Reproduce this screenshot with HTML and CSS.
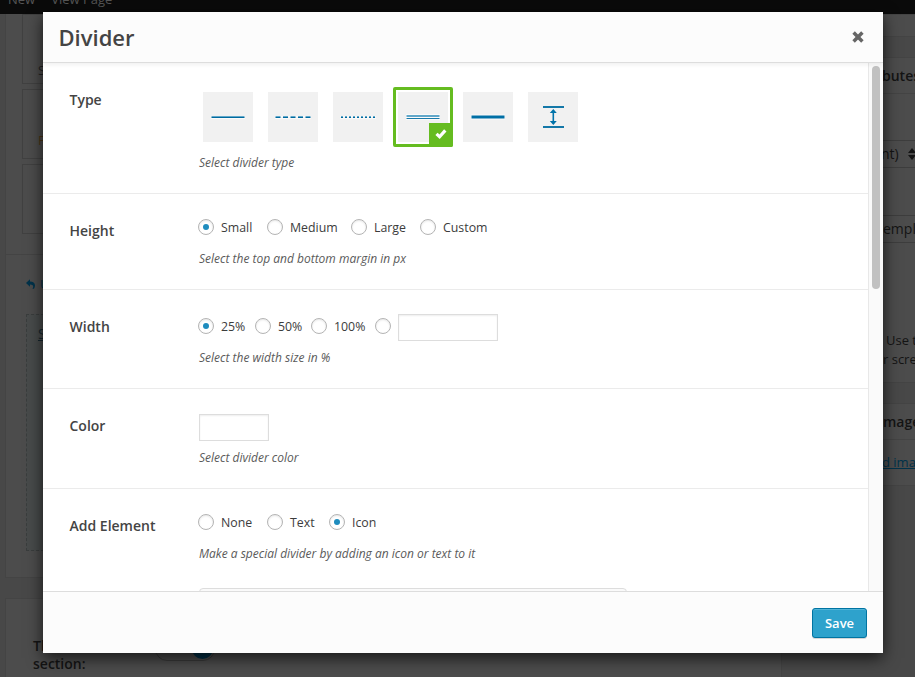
FILE: index.html
```html
<!DOCTYPE html>
<html lang="en">
<head>
<meta charset="utf-8">
<title>Divider</title>
<link rel="stylesheet" href="styles.css">
</head>
<body>
<div class="page">
  <div class="adminbar"><span>New</span><span>View Page</span></div>
  <div class="columns">
    <div class="main">
      <div class="panel builder">
        <div class="elements">
          <div class="element first">S</div>
          <div class="element orange">F</div>
          <div class="element"></div>
        </div>
        <div class="undo">
          <svg width="10" height="10" viewBox="0 0 10 10"><path d="M0 4 4 .3V2.6C8 2.6 10.5 5.5 8 9.7H6.5C8 7 7 5.5 4 5.5V7.8Z" fill="#00324a"/></svg>
          <span>U</span>
        </div>
        <div class="canvas"><span>S</span></div>
      </div>
      <div class="panel settings">
        <div class="question">Th<br>section:</div>
        <div class="toggle"><i></i></div>
      </div>
    </div>
    <div class="side">
      <div class="panel box-top"><span></span></div>
      <div class="panel attributes">
        <h3>butes</h3>
        <div class="select">nt)<svg width="8" height="12" viewBox="0 0 8 12"><path d="M0 5 4 0 8 5ZM0 7H8L4 12Z" fill="#141414"/></svg></div>
        <div class="select template">empl</div>
        <p>Use t</p><p class="second">r scre</p>
      </div>
      <div class="panel image"><h3>mage</h3><a>d ima</a></div>
    </div>
  </div>
</div>

<div class="modal">
  <div class="modal-head">
    <h1>Divider</h1>
    <svg class="close" width="12" height="12" viewBox="0 0 12 12"><path d="M1.6 1.6 10.4 10.4M10.4 1.6 1.6 10.4" stroke="#666" stroke-width="3.5"/></svg>
  </div>
  <div class="modal-body">
    <div class="options">
      <div class="row type">
        <label>Type</label>
        <div class="control">
          <div class="tiles">
            <div class="tile"><svg width="50" height="50"><path d="M8 24.5H42M8 26.5H42" stroke="#fafafa"/><path d="M8.5 24.5H41.5" stroke="#61a7c9"/><path d="M8.5 25.5H41.5" stroke="#006a9f"/></svg></div>
            <div class="tile"><svg width="50" height="50"><path d="M7 24.5H43M7 26.5H43" stroke="#fafafa"/><path d="M7.5 24.5H43" stroke="#61a7c9" stroke-dasharray="5 2.5"/><path d="M7.5 25.5H43" stroke="#006a9f" stroke-dasharray="5 2.5"/></svg></div>
            <div class="tile"><svg width="50" height="50"><path d="M7 24.5H43M7 26.5H43" stroke="#fafafa"/><path d="M8 24.5H42" stroke="#61a7c9" stroke-dasharray="2 2"/><path d="M8 25.5H42" stroke="#006a9f" stroke-dasharray="2 2"/></svg></div>
            <div class="tile selected"><svg width="50" height="50"><path d="M8 25H42" stroke="#fafafa" stroke-width="6"/><path d="M8.5 24H41.5" stroke="#61a7c9" stroke-width="2"/><path d="M8.5 26.5H41.5" stroke="#197aaa"/></svg>
              <span class="check"><svg width="12" height="10" viewBox="0 0 12 10"><path d="M1.5 4.8 4.6 7.7 10.3 1.4" fill="none" stroke="#fff" stroke-width="3.2"/></svg></span></div>
            <div class="tile"><svg width="50" height="50"><path d="M8 25H42" stroke="#fafafa" stroke-width="5"/><path d="M8.5 25H41.5" stroke="#006fa5" stroke-width="3"/></svg></div>
            <div class="tile"><svg width="50" height="50"><path d="M15 15H36M15 35H36" stroke="#1478a8" stroke-width="2"/><path d="M25.3 19V31" stroke="#0073aa" stroke-width="1.6"/><path d="M25.3 17 28.8 21H21.8ZM25.3 33 28.8 29H21.8Z" fill="#0073aa"/></svg></div>
          </div>
          <p>Select divider type</p>
        </div>
      </div>
      <div class="row height">
        <label>Height</label>
        <div class="control">
          <div class="radios">
            <span class="choice c1"><i class="radio on"></i><b>Small</b></span>
            <span class="choice c2"><i class="radio"></i><b>Medium</b></span>
            <span class="choice c1"><i class="radio"></i><b>Large</b></span>
            <span class="choice"><i class="radio"></i><b>Custom</b></span>
          </div>
          <p>Select the top and bottom margin in px</p>
        </div>
      </div>
      <div class="row width">
        <label>Width</label>
        <div class="control">
          <div class="radios">
            <span class="choice c3"><i class="radio on"></i><b>25%</b></span>
            <span class="choice c4"><i class="radio"></i><b>50%</b></span>
            <span class="choice c5"><i class="radio"></i><b>100%</b></span>
            <span class="choice"><i class="radio"></i></span>
            <input class="field custom" type="text" aria-label="Custom width">
          </div>
          <p>Select the width size in %</p>
        </div>
      </div>
      <div class="row color">
        <label>Color</label>
        <div class="control">
          <input class="field swatch" type="text" aria-label="Color">
          <p>Select divider color</p>
        </div>
      </div>
      <div class="row element-row">
        <label>Add Element</label>
        <div class="control">
          <div class="radios">
            <span class="choice c1"><i class="radio"></i><b>None</b></span>
            <span class="choice c6"><i class="radio"></i><b>Text</b></span>
            <span class="choice"><i class="radio on"></i><b>Icon</b></span>
          </div>
          <p>Make a special divider by adding an icon or text to it</p>
          <div class="icon-picker"></div>
        </div>
      </div>
    </div>
    <div class="scroll"><div class="thumb"></div></div>
  </div>
  <div class="modal-foot"><button>Save</button></div>
</div>
</body>
</html>
```
FILE: styles.css
```css
* { box-sizing: border-box; }
body {
  margin: 0;
  width: 915px;
  height: 677px;
  overflow: hidden;
  background: #484848;
  color: #444;
  font: 13px/20px "Open Sans", sans-serif;
}
h1, h3, p { margin: 0; }
svg { display: block; }

/* Dimmed editor behind the dialog */
.page { height: 677px; overflow: hidden; color: #141414; }
.adminbar {
  display: flex;
  gap: 16px;
  height: 14px;
  padding-left: 8px;
  overflow: hidden;
  background: #0a0a0a;
  color: #555;
  line-height: 18px;
}
.adminbar span { margin-top: -10px; }
.columns { display: flex; height: 663px; }
.main { width: 777px; margin-left: 5px; flex: none; }
.panel { background: #4c4c4c; border: 1px solid #444; }
.builder { height: 564px; border-top: 0; }
.elements { height: 241px; border-bottom: 1px solid #444; padding-left: 16px; }
.element {
  width: 70px;
  height: 70px;
  margin-bottom: 5px;
  padding: 40px 0 0 15px;
  border: 1px solid #414141;
}
.element.first { padding-top: 45px; color: #222; }
.element.orange { color: #4b3517; }
.undo {
  display: flex;
  align-items: center;
  gap: 4px;
  height: 59px;
  padding: 0 0 2px 20px;
  color: #00324a;
}
.canvas {
  width: 700px;
  height: 237px;
  margin-left: 20px;
  padding: 9px 0 0 11px;
  border: 1px dashed #3a3d3d;
  background: #484b4b;
}
.canvas span { color: #16262e; font-size: 14px; text-decoration: underline; }
.settings { display: flex; height: 90px; margin-top: 20px; padding: 38px 0 0 27px; }
.question { width: 122px; font-size: 14px; font-weight: 600; line-height: 18px; }
.toggle {
  display: flex;
  justify-content: flex-end;
  width: 60px;
  height: 24px;
  border: 1px solid #3a3a3a;
  border-radius: 12px;
  padding: 0 1px;
}
.toggle i { width: 21px; height: 21px; border-radius: 50%; background: #003047; }
.side { flex: 1; margin-left: 19px; min-width: 0; overflow: hidden; }
.side .panel { border-right: 0; }
.side h3 { height: 36px; padding-left: 80px; border-bottom: 1px solid #444; font-size: 14px; font-weight: 600; line-height: 36px; }
.box-top { height: 23px; }
.attributes { height: 326px; margin-top: 20px; }
.select {
  display: flex;
  align-items: center;
  justify-content: space-between;
  height: 28px;
  margin-top: 46px;
  padding-left: 79px;
  border: solid #3d3d3d;
  border-width: 1px 0;
  font-size: 14px;
  overflow: hidden;
}
.select svg { flex: none; margin-right: -1px; }
.select.template { margin-top: 47px; padding-left: 81px; }
.attributes p { padding-left: 84px; margin-top: 88px; line-height: 19px; white-space: nowrap; }
.attributes p.second { margin-top: 0; padding-left: 81px; }
.image { height: 83px; margin-top: 20px; }
.image h3 { padding-left: 81px; }
.image a { display: block; padding: 12px 0 0 80px; color: #00324a; text-decoration: underline; white-space: nowrap; }

/* Dialog */
.modal {
  position: absolute;
  left: 43px;
  top: 12px;
  display: flex;
  flex-direction: column;
  width: 840px;
  height: 641px;
  background: #fff;
  box-shadow: 0 5px 15px rgba(0, 0, 0, .7);
}
.modal-head {
  position: relative;
  z-index: 1;
  display: flex;
  align-items: center;
  justify-content: space-between;
  height: 51px;
  flex: none;
  padding: 0 19.5px 0 15.5px;
  background: #fcfcfc;
  border-bottom: 1px solid #ddd;
  box-shadow: 0 2px 4px rgba(0, 0, 0, .06);
}
h1 { font-size: 22px; font-weight: 600; line-height: 50px; }
.modal-body { display: flex; height: 528px; overflow: hidden; }
.options { flex: 1; }
.row { display: grid; grid-template-columns: 129px 1fr; padding-left: 26px; border-bottom: 1px solid #ebebeb; }
.row label { padding: 27px 0 0 .5px; font-size: 14px; font-weight: 600; }
.row p { padding-left: 1px; color: #5a5a5a; font-size: 12px; font-style: italic; line-height: 18px; }
.type { height: 131px; }
.height { height: 96px; }
.width { height: 99px; }
.color { height: 100px; }
.element-row { height: 140px; }
.tiles { display: flex; gap: 15px; padding: 29px 0 12px 5px; }
.tile { position: relative; width: 50px; height: 50px; background: #f1f1f1; }
.tile.selected::after {
  content: "";
  position: absolute;
  inset: -5px;
  border: 3px solid #65bc20;
  border-radius: 2px;
}
.tile.selected { box-shadow: 0 0 0 2px #fff; }
.check {
  position: absolute;
  right: -5px;
  bottom: -5px;
  display: flex;
  align-items: center;
  justify-content: center;
  width: 24px;
  height: 24px;
  padding-bottom: 3px;
  background: #65bc20;
  border-radius: 0 0 2px 0;
}
.radios { display: flex; align-items: center; height: 28px; margin-top: 19px; font-size: 12.35px; }
.height p { margin-top: 9px; }
.choice { display: flex; align-items: center; gap: 7px; }
.choice b { padding-top: 2px; font-weight: 400; line-height: 18px; color: #3c3c3c; }
.c1 { width: 69px; }
.c2 { width: 84px; }
.c3 { width: 57px; }
.c4 { width: 56px; }
.c5 { width: 64px; }
.c6 { width: 62px; }
.radio {
  display: grid;
  place-items: center;
  width: 16px;
  height: 16px;
  border: 1px solid #b4b4b4;
  border-radius: 50%;
  box-shadow: inset 0 1px 2px rgba(0, 0, 0, .1);
}
.radio.on::before { content: ""; width: 6px; height: 6px; border-radius: 50%; background: #1e8cbe; }
.width .radios { margin-top: 22px; }
.width p { margin-top: 9px; }
.field { height: 27px; padding: 0; border: 1px solid #ddd; background: #fff; box-shadow: inset 0 1px 2px rgba(0, 0, 0, .07); }
.custom { width: 100px; margin: 3px 0 0 7px; }
.swatch { display: block; width: 70px; margin: 25px 0 8px 1px; }
.element-row p { margin-top: 9px; }
.icon-picker { width: 428px; height: 60px; margin: 25px 0 0 1px; border: 1px solid #ddd; border-radius: 4px; background: #fafafa; }
.scroll { width: 15px; padding: 3px 0 0 3px; border-left: 1px solid #e8e8e8; background: #fafafa; }
.thumb { width: 8px; height: 223px; border-radius: 4px; background: #c1c1c1; }
.modal-foot {
  display: flex;
  align-items: center;
  justify-content: flex-end;
  height: 62px;
  padding: 0 16px 0 0;
  background: #fcfcfc;
  border-top: 1px solid #ddd;
}
button {
  width: 55px;
  height: 30px;
  padding: 0;
  border: 1px solid #0074a2;
  border-radius: 3px;
  background: #2ea2cc;
  box-shadow: inset 0 1px 0 rgba(120, 200, 230, .5), 0 1px 0 rgba(0, 0, 0, .15);
  color: #fff;
  font: 600 13px/28px "Open Sans", sans-serif;
}
```
